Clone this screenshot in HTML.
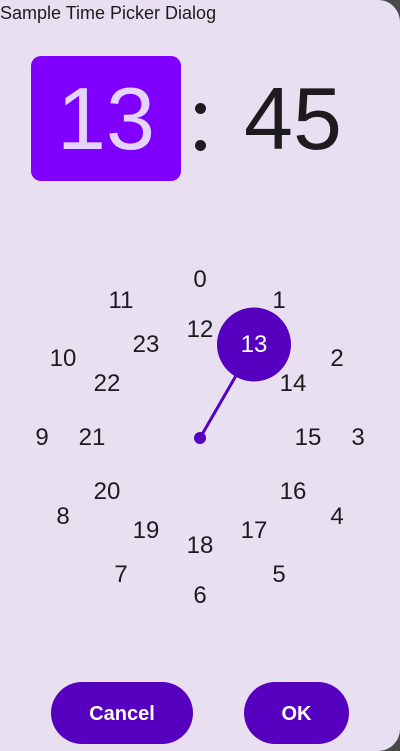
<!DOCTYPE html>
<html><head><meta charset="utf-8"><style>
html,body{margin:0;padding:0;background:#4a4a4a;}
#d{position:relative;width:400px;height:751px;background:#E8E0F0;border-radius:0 22px 22px 0;overflow:hidden;font-family:"Liberation Sans",sans-serif;color:#1d1b20;}
.t{position:absolute;left:0;top:2px;font-size:18px;line-height:22px;}
.hb{position:absolute;left:31px;top:56px;width:150px;height:125px;background:#7F00FF;border-radius:10px;color:#E5D4FF;font-size:88px;line-height:125px;text-align:center;}
.dot{position:absolute;left:195px;width:11px;height:11px;border-radius:50%;background:#1d1b20;}
.mn{position:absolute;left:230px;top:56px;width:126px;height:125px;font-size:88px;line-height:125px;text-align:center;}
.n{position:absolute;font-size:24px;line-height:24px;transform:translate(-50%,-50%);white-space:nowrap;}
.btn{position:absolute;top:682px;height:62px;background:#5600C0;color:#fff;border-radius:31px;font-size:20px;font-weight:bold;line-height:64px;text-align:center;}
</style></head><body><div id="d">
<div class="t">Sample Time Picker Dialog</div>
<div class="hb">13</div>
<div class="dot" style="top:103px"></div>
<div class="dot" style="top:140px"></div>
<div class="mn">45</div>
<svg style="position:absolute;left:0;top:0" width="400" height="751">
<line x1="200" y1="438" x2="254" y2="344.5" stroke="#5600C0" stroke-width="3"/>
<circle cx="200" cy="438" r="6" fill="#5600C0"/>
<circle cx="254" cy="344.5" r="37" fill="#5600C0"/>
</svg>
<div class="n" style="left:200px;top:280px">0</div>
<div class="n" style="left:279px;top:301px">1</div>
<div class="n" style="left:337px;top:359px">2</div>
<div class="n" style="left:358px;top:438px">3</div>
<div class="n" style="left:337px;top:517px">4</div>
<div class="n" style="left:279px;top:575px">5</div>
<div class="n" style="left:200px;top:596px">6</div>
<div class="n" style="left:121px;top:575px">7</div>
<div class="n" style="left:63px;top:517px">8</div>
<div class="n" style="left:42px;top:438px">9</div>
<div class="n" style="left:63px;top:359px">10</div>
<div class="n" style="left:121px;top:301px">11</div>
<div class="n" style="left:200px;top:330px">12</div>
<div class="n" style="left:254px;top:345px;color:#fff">13</div>
<div class="n" style="left:293px;top:384px">14</div>
<div class="n" style="left:308px;top:438px">15</div>
<div class="n" style="left:293px;top:492px">16</div>
<div class="n" style="left:254px;top:531px">17</div>
<div class="n" style="left:200px;top:546px">18</div>
<div class="n" style="left:146px;top:531px">19</div>
<div class="n" style="left:107px;top:492px">20</div>
<div class="n" style="left:92px;top:438px">21</div>
<div class="n" style="left:107px;top:384px">22</div>
<div class="n" style="left:146px;top:345px">23</div>
<div class="btn" style="left:51px;width:142px">Cancel</div>
<div class="btn" style="left:244px;width:105px">OK</div>
</div></body></html>
